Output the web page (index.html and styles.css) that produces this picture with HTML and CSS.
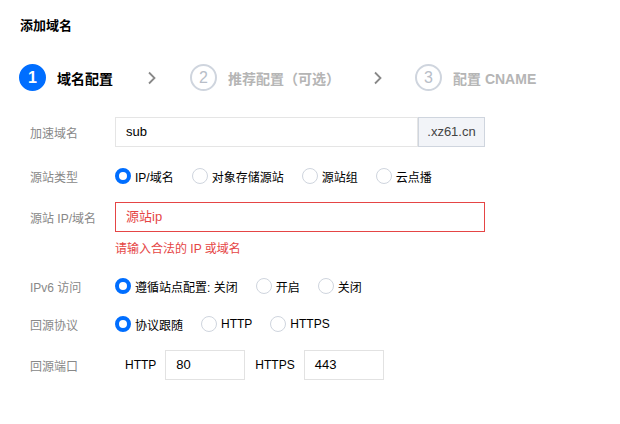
FILE: index.html
```html
<!DOCTYPE html>
<html lang="zh-CN">
<head>
    <meta charset="UTF-8">
    <title>添加域名</title>
    <link rel="stylesheet" href="styles.css">
</head>
<body>
    <div class="page">
        <h1>添加域名</h1>

        <div class="steps">
            <div class="step active">
                <span class="num">1</span>
                <span class="step-title">域名配置</span>
            </div>
            <svg class="arrow" width="10" height="14" viewBox="0 0 10 14"><path d="M2 1.5 L7.5 7 L2 12.5" fill="none" stroke="#888" stroke-width="1.8"/></svg>
            <div class="step">
                <span class="num">2</span>
                <span class="step-title">推荐配置（可选）</span>
            </div>
            <svg class="arrow last" width="10" height="14" viewBox="0 0 10 14"><path d="M2 1.5 L7.5 7 L2 12.5" fill="none" stroke="#888" stroke-width="1.8"/></svg>
            <div class="step">
                <span class="num">3</span>
                <span class="step-title">配置 CNAME</span>
            </div>
        </div>

        <div class="form">
            <div class="row row-domain">
                <label>加速域名</label>
                <div class="input-group">
                    <div class="input">sub</div>
                    <div class="suffix">.xz61.cn</div>
                </div>
            </div>

            <div class="row row-type">
                <label>源站类型</label>
                <div class="radios">
                    <span class="radio checked"><i></i>IP/域名</span>
                    <span class="radio"><i></i>对象存储源站</span>
                    <span class="radio"><i></i>源站组</span>
                    <span class="radio"><i></i>云点播</span>
                </div>
            </div>

            <div class="row row-origin">
                <label>源站 IP/域名</label>
                <div class="input error">源站ip</div>
            </div>
            <div class="error-msg">请输入合法的 IP 或域名</div>

            <div class="row row-ipv6">
                <label>IPv6 访问</label>
                <div class="radios">
                    <span class="radio checked"><i></i>遵循站点配置: 关闭</span>
                    <span class="radio"><i></i>开启</span>
                    <span class="radio"><i></i>关闭</span>
                </div>
            </div>

            <div class="row row-proto">
                <label>回源协议</label>
                <div class="radios">
                    <span class="radio checked"><i></i>协议跟随</span>
                    <span class="radio"><i></i>HTTP</span>
                    <span class="radio"><i></i>HTTPS</span>
                </div>
            </div>

            <div class="row row-port">
                <label>回源端口</label>
                <div class="ports">
                    <span class="port-name">HTTP</span>
                    <div class="input small">80</div>
                    <span class="port-name">HTTPS</span>
                    <div class="input small">443</div>
                </div>
            </div>
        </div>
    </div>
</body>
</html>
```

FILE: styles.css
```css
body {
    margin: 0;
    background: #fff;
    font-family: "Liberation Sans", "Noto Sans CJK SC", sans-serif;
    color: #000;
}
.page {
    padding: 17px 20px 0 20px;
}
h1 {
    margin: 0;
    font-size: 13px;
    line-height: 18px;
    font-weight: bold;
    color: #000;
}
.steps {
    display: flex;
    align-items: center;
    margin-top: 29px;
    margin-left: -1px;
}
.step {
    display: flex;
    align-items: center;
}
.num {
    width: 23px;
    height: 23px;
    border-radius: 50%;
    border: 2px solid #cfd5de;
    color: #b8bec8;
    font-size: 16px;
    display: flex;
    align-items: center;
    justify-content: center;
}
.step-title {
    margin-left: 11px;
    font-size: 14px;
    color: #b5b5b5;
    font-weight: bold;
}
.step.active .num {
    background: #006eff;
    border-color: #006eff;
    color: #fff;
    font-weight: bold;
}
.step.active .step-title {
    color: #000;
}
.arrow {
    margin: 0 33px 0 34px;
}
.arrow.last {
    margin: 0 32px 0 33px;
}
.form {
    margin-top: 26px;
    font-size: 12px;
}
.row {
    display: flex;
    align-items: center;
    height: 30px;
}
.row label {
    width: 85px;
    padding-left: 10px;
    color: #888;
    flex-shrink: 0;
}
.input-group {
    display: flex;
    width: 370px;
}
.input {
    box-sizing: border-box;
    height: 30px;
    line-height: 28px;
    border: 1px solid #e5e5e5;
    padding: 0 10px;
    font-size: 13px;
    color: #000;
    flex-grow: 1;
}
.suffix {
    box-sizing: border-box;
    height: 30px;
    line-height: 28px;
    width: 67px;
    background: #f2f4f8;
    border: 1px solid #cfd5de;
    font-size: 13px;
    color: #444;
    text-align: center;
}
.input.error {
    flex-grow: 0;
    width: 370px;
    border-color: #e54545;
    color: #e54545;
}
.error-msg {
    margin: 9px 0 0 95px;
    color: #e54545;
    font-size: 12px;
    line-height: 16px;
}
.row-type {
    margin-top: 14px;
}
.row-origin {
    margin-top: 11px;
}
.row-ipv6 {
    margin-top: 14px;
}
.row-proto {
    margin-top: 8px;
}
.row-port {
    margin-top: 11px;
}
.radios {
    display: flex;
    align-items: center;
}
.radio {
    display: flex;
    align-items: center;
    margin-right: 18px;
    color: #000;
}
.radio i {
    box-sizing: border-box;
    width: 16px;
    height: 16px;
    border-radius: 50%;
    border: 1px solid #cfd5de;
    margin-right: 4px;
}
.radio.checked i {
    border: 4px solid #006eff;
}
.ports {
    display: flex;
    align-items: center;
}
.port-name {
    margin: 0 9px 0 10px;
    font-size: 12px;
    color: #000;
}
.input.small {
    width: 80px;
    flex-grow: 0;
    border-color: #e2e2e2;
}
```
